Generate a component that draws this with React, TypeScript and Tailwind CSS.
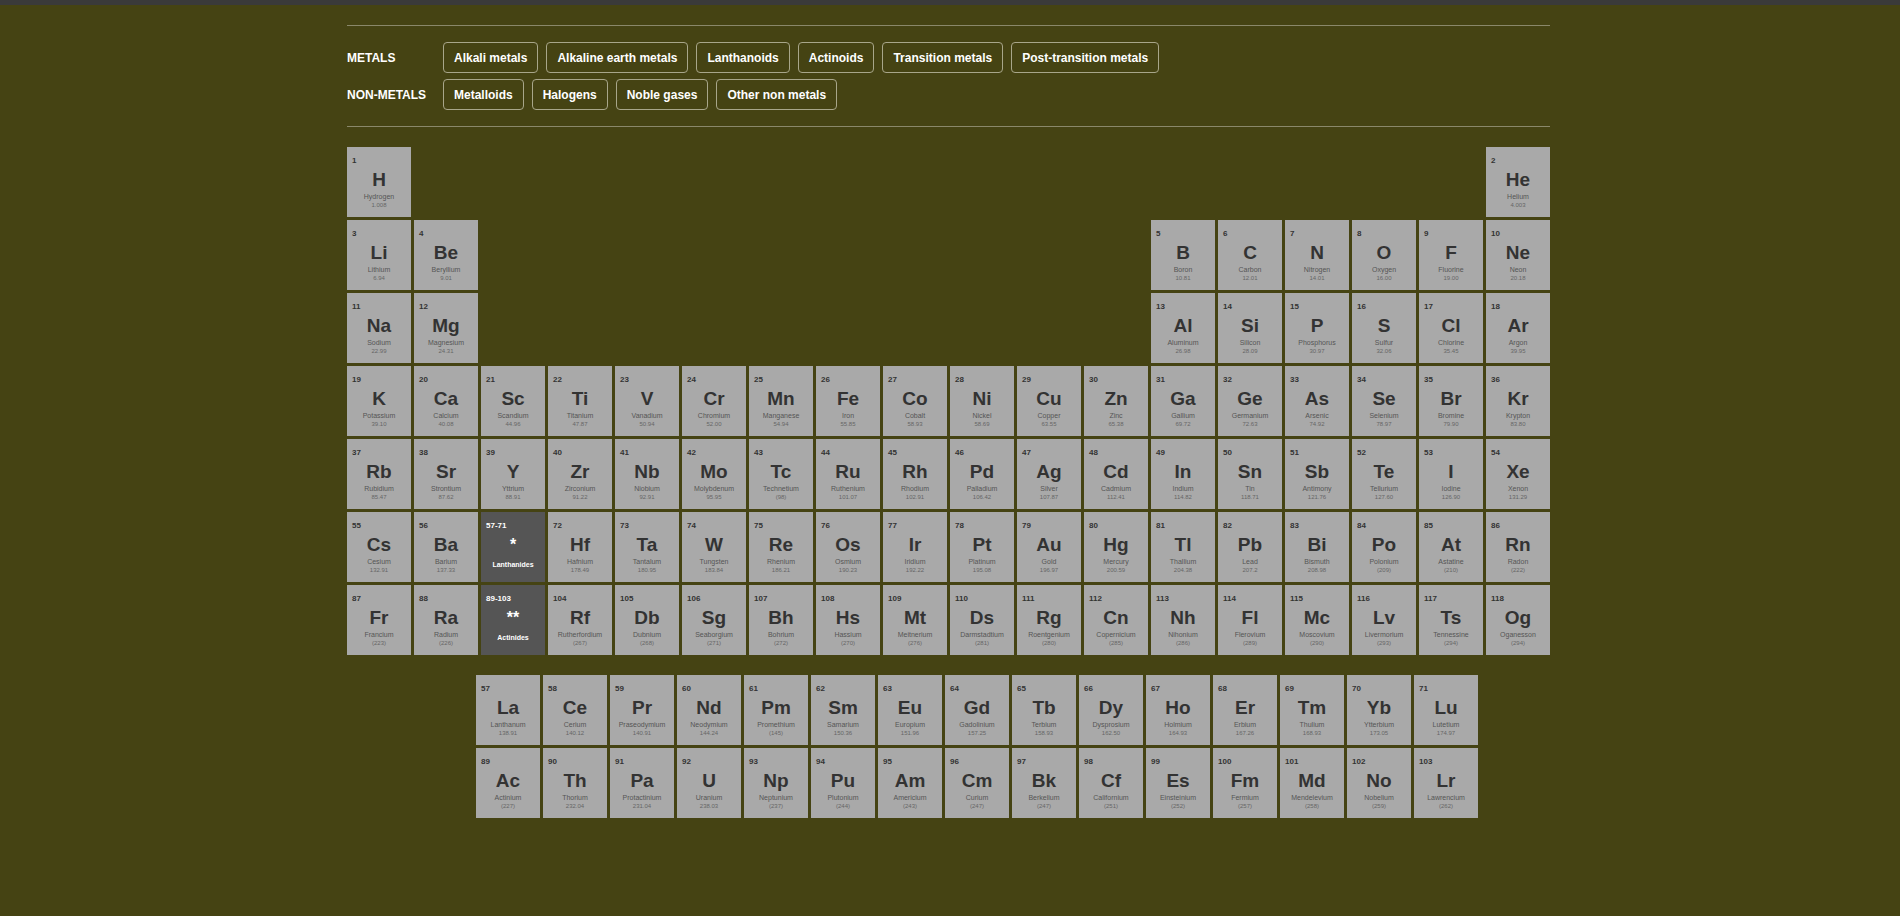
import React from "react";

const raw = `1,H,Hydrogen,1.008,1,1
2,He,Helium,4.003,1,18
3,Li,Lithium,6.94,2,1
4,Be,Beryllium,9.01,2,2
5,B,Boron,10.81,2,13
6,C,Carbon,12.01,2,14
7,N,Nitrogen,14.01,2,15
8,O,Oxygen,16.00,2,16
9,F,Fluorine,19.00,2,17
10,Ne,Neon,20.18,2,18
11,Na,Sodium,22.99,3,1
12,Mg,Magnesium,24.31,3,2
13,Al,Aluminum,26.98,3,13
14,Si,Silicon,28.09,3,14
15,P,Phosphorus,30.97,3,15
16,S,Sulfur,32.06,3,16
17,Cl,Chlorine,35.45,3,17
18,Ar,Argon,39.95,3,18
19,K,Potassium,39.10,4,1
20,Ca,Calcium,40.08,4,2
21,Sc,Scandium,44.96,4,3
22,Ti,Titanium,47.87,4,4
23,V,Vanadium,50.94,4,5
24,Cr,Chromium,52.00,4,6
25,Mn,Manganese,54.94,4,7
26,Fe,Iron,55.85,4,8
27,Co,Cobalt,58.93,4,9
28,Ni,Nickel,58.69,4,10
29,Cu,Copper,63.55,4,11
30,Zn,Zinc,65.38,4,12
31,Ga,Gallium,69.72,4,13
32,Ge,Germanium,72.63,4,14
33,As,Arsenic,74.92,4,15
34,Se,Selenium,78.97,4,16
35,Br,Bromine,79.90,4,17
36,Kr,Krypton,83.80,4,18
37,Rb,Rubidium,85.47,5,1
38,Sr,Strontium,87.62,5,2
39,Y,Yttrium,88.91,5,3
40,Zr,Zirconium,91.22,5,4
41,Nb,Niobium,92.91,5,5
42,Mo,Molybdenum,95.95,5,6
43,Tc,Technetium,(98),5,7
44,Ru,Ruthenium,101.07,5,8
45,Rh,Rhodium,102.91,5,9
46,Pd,Palladium,106.42,5,10
47,Ag,Silver,107.87,5,11
48,Cd,Cadmium,112.41,5,12
49,In,Indium,114.82,5,13
50,Sn,Tin,118.71,5,14
51,Sb,Antimony,121.76,5,15
52,Te,Tellurium,127.60,5,16
53,I,Iodine,126.90,5,17
54,Xe,Xenon,131.29,5,18
55,Cs,Cesium,132.91,6,1
56,Ba,Barium,137.33,6,2
72,Hf,Hafnium,178.49,6,4
73,Ta,Tantalum,180.95,6,5
74,W,Tungsten,183.84,6,6
75,Re,Rhenium,186.21,6,7
76,Os,Osmium,190.23,6,8
77,Ir,Iridium,192.22,6,9
78,Pt,Platinum,195.08,6,10
79,Au,Gold,196.97,6,11
80,Hg,Mercury,200.59,6,12
81,Tl,Thallium,204.38,6,13
82,Pb,Lead,207.2,6,14
83,Bi,Bismuth,208.98,6,15
84,Po,Polonium,(209),6,16
85,At,Astatine,(210),6,17
86,Rn,Radon,(222),6,18
87,Fr,Francium,(223),7,1
88,Ra,Radium,(226),7,2
104,Rf,Rutherfordium,(267),7,4
105,Db,Dubnium,(268),7,5
106,Sg,Seaborgium,(271),7,6
107,Bh,Bohrium,(272),7,7
108,Hs,Hassium,(270),7,8
109,Mt,Meitnerium,(276),7,9
110,Ds,Darmstadtium,(281),7,10
111,Rg,Roentgenium,(280),7,11
112,Cn,Copernicium,(285),7,12
113,Nh,Nihonium,(286),7,13
114,Fl,Flerovium,(289),7,14
115,Mc,Moscovium,(290),7,15
116,Lv,Livermorium,(293),7,16
117,Ts,Tennessine,(294),7,17
118,Og,Oganesson,(294),7,18`;

const lan = `57,La,Lanthanum,138.91
58,Ce,Cerium,140.12
59,Pr,Praseodymium,140.91
60,Nd,Neodymium,144.24
61,Pm,Promethium,(145)
62,Sm,Samarium,150.36
63,Eu,Europium,151.96
64,Gd,Gadolinium,157.25
65,Tb,Terbium,158.93
66,Dy,Dysprosium,162.50
67,Ho,Holmium,164.93
68,Er,Erbium,167.26
69,Tm,Thulium,168.93
70,Yb,Ytterbium,173.05
71,Lu,Lutetium,174.97`;

const act = `89,Ac,Actinium,(227)
90,Th,Thorium,232.04
91,Pa,Protactinium,231.04
92,U,Uranium,238.03
93,Np,Neptunium,(237)
94,Pu,Plutonium,(244)
95,Am,Americium,(243)
96,Cm,Curium,(247)
97,Bk,Berkelium,(247)
98,Cf,Californium,(251)
99,Es,Einsteinium,(252)
100,Fm,Fermium,(257)
101,Md,Mendelevium,(258)
102,No,Nobelium,(259)
103,Lr,Lawrencium,(262)`;

const els = raw.split("\n").map((l) => {
  const [n, s, name, m, r, c] = l.split(",");
  return { n, s, name, m, r: +r, c: +c };
});
const parse = (t: string) => t.split("\n").map((l) => { const [n, s, name, m] = l.split(","); return { n, s, name, m }; });

function Cell({ n, s, name, m, style }: { n: string; s: string; name: string; m: string; style?: React.CSSProperties }) {
  return (
    <div style={style} className="bg-[#a9a9a9] w-[64px] h-[70px] flex flex-col items-center text-[#333] relative">
      <div className="absolute left-[5px] top-[8px] text-[8px] font-bold">{n}</div>
      <div className="mt-[23px] text-[19px] leading-[20px] font-bold">{s}</div>
      <div className="text-[7px] text-[#555] mt-[2px] leading-[9px]">{name}</div>
      <div className="text-[6px] text-[#666] leading-[9px]">{m}</div>
    </div>
  );
}

function Special({ range, star, label, style }: { range: string; star: string; label: string; style?: React.CSSProperties }) {
  return (
    <div style={style} className="bg-[#555] w-[64px] h-[70px] flex flex-col items-center text-white relative">
      <div className="absolute left-[5px] top-[8px] text-[8px] font-bold">{range}</div>
      <div className="mt-[26px] text-[16px] leading-[14px] font-bold">{star}</div>
      <div className="text-[7px] font-bold mt-[8px]">{label}</div>
    </div>
  );
}

const Btn = ({ t }: { t: string }) => (
  <div className="h-[31px] px-[10px] flex items-center border border-[#a8a68a] rounded-[4px] text-white text-[12px] font-bold">{t}</div>
);

export default function App() {
  return (
    <div className="min-h-[916px] bg-[#454313] border-t-[5px] border-[#3a3a3a]" style={{ fontFamily: '"Liberation Sans", Arial, sans-serif' }}>
      <div className="w-[1203px] ml-[347px] pt-[20px]">
        <div className="h-px bg-[#8a886a]" />
        <div className="flex flex-col gap-[6px] py-[16px]">
          <div className="flex items-center gap-[8px]">
            <div className="w-[88px] text-white text-[12px] font-bold">METALS</div>
            {["Alkali metals", "Alkaline earth metals", "Lanthanoids", "Actinoids", "Transition metals", "Post-transition metals"].map((t) => <Btn key={t} t={t} />)}
          </div>
          <div className="flex items-center gap-[8px]">
            <div className="w-[88px] text-white text-[12px] font-bold">NON-METALS</div>
            {["Metalloids", "Halogens", "Noble gases", "Other non metals"].map((t) => <Btn key={t} t={t} />)}
          </div>
        </div>
        <div className="h-px bg-[#8a886a]" />
        <div className="grid grid-cols-[repeat(18,64px)] grid-rows-[repeat(7,70px)] gap-[3px] mt-[20px]">
          {els.map((e) => <Cell key={e.n} {...e} style={{ gridRow: e.r, gridColumn: e.c }} />)}
          <Special range="57-71" star="*" label="Lanthanides" style={{ gridRow: 6, gridColumn: 3 }} />
          <Special range="89-103" star="**" label="Actinides" style={{ gridRow: 7, gridColumn: 3 }} />
        </div>
        <div className="ml-[129px] mt-[20px] flex flex-col gap-[3px]">
          {[parse(lan), parse(act)].map((row, i) => (
            <div key={i} className="flex gap-[3px]">
              {row.map((e) => <Cell key={e.n} {...e} />)}
            </div>
          ))}
        </div>
      </div>
    </div>
  );
}
